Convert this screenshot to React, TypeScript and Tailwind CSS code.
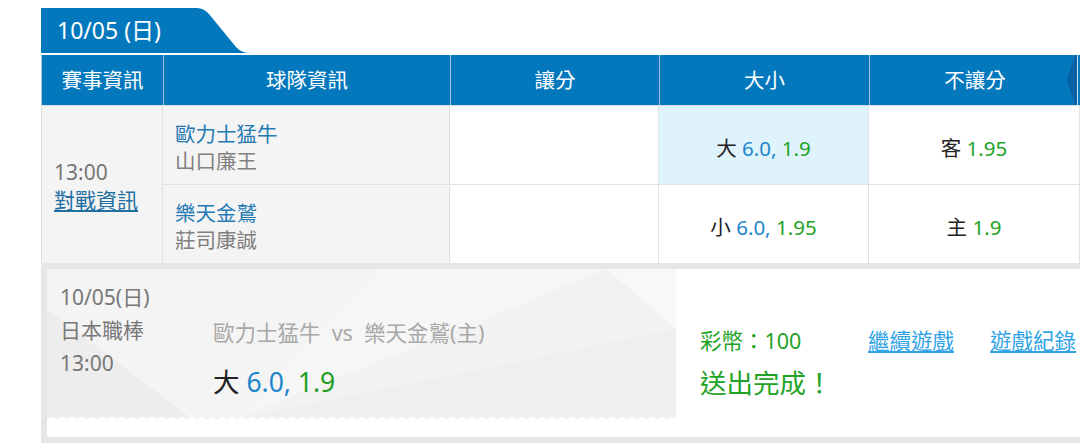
import React from "react";

const font = "font-['Noto_Sans','Noto_Sans_CJK_TC',sans-serif]";

function Zigzag() {
  // scalloped tear-off edge at the bottom of the ticket
  let d = "M0 6 L0 3";
  for (let x = 0; x < 640; x += 10) {
    d += ` Q${x + 2.5} 0 ${x + 5} 0 Q${x + 7.5} 0 ${x + 10} 3`;
  }
  d += " L640 6 Z";
  return (
    <svg width="629" height="6" viewBox="0 0 629 6" className="block">
      <path d={d} fill="#ffffff" />
    </svg>
  );
}

function TicketBg() {
  return (
    <svg className="absolute inset-0" width="629" height="154" viewBox="0 0 629 154">
      <rect width="629" height="154" fill="#f2f2f2" />
      <polygon points="0,0 330,0 190,150 0,154" fill="#f4f4f4" />
      <polygon points="0,40 150,154 0,154" fill="#ededed" />
      <polygon points="330,0 560,0 190,150" fill="#f6f6f6" />
      <polygon points="190,150 629,60 629,154 160,154" fill="#efefef" />
      <polygon points="560,0 629,0 629,60" fill="#f8f8f8" />
    </svg>
  );
}

export default function App() {
  const headCell = "flex items-center justify-center border-r border-[#9fc3dd] text-white text-[20.5px]";
  return (
    <div className={`w-[1080px] h-[444px] bg-white overflow-hidden relative ${font}`}>
      {/* date tab */}
      <div className="flex h-[45px] mt-2 ml-[41px]">
        <div className="w-[152px] bg-[#0478bd] flex items-center pl-4 text-white text-[23px]">10/05 (日)</div>
        <svg width="58" height="45" viewBox="0 0 58 45" className="block">
          <path d="M0 0 H4 Q11 0 16 6 L43 39 Q48 45 58 45 H0 Z" fill="#0478bd" />
        </svg>
      </div>

      {/* table */}
      <div className="ml-[41px] mt-[2px] w-[1039px] relative">
        <div className="grid grid-cols-[122px_287px_209px_210px_211px] h-[50px] bg-[#0478bd] border-l border-[#9fc3dd]">
          <div className={headCell}>賽事資訊</div>
          <div className={headCell}>球隊資訊</div>
          <div className={headCell}>讓分</div>
          <div className={headCell}>大小</div>
          <div className={headCell}>不讓分</div>
        </div>
        <div className="absolute right-[3px] top-0 h-[50px] w-[10px]">
          <svg width="10" height="50" viewBox="0 0 10 50" className="block">
            <polygon points="10,0 10,50 8,50 0,25 8,0" fill="#0560a6" />
          </svg>
        </div>
        <div className="absolute right-[2px] top-0 h-[50px] w-px bg-[#cfe0ec]" />

        <div className="grid grid-cols-[122px_287px_209px_210px_211px] grid-rows-[79px_78px] border-t border-[#dcdcdc] text-[20.5px]">
          <div className="row-span-2 bg-[#f4f4f4] border-r border-l border-[#e0e0e0] flex flex-col justify-center pl-3 pt-[3px] leading-[28px] text-[21px]">
            <span className="text-[#777]">13:00</span>
            <span className="text-[#1f6fa3] underline underline-offset-2">對戰資訊</span>
          </div>
          <div className="bg-[#f4f4f4] border-r border-b border-[#e2e2e2] flex flex-col justify-center pl-3 pt-[6px] leading-[27px]">
            <span className="text-[#2479b3]">歐力士猛牛</span>
            <span className="text-[#808080]">山口廉王</span>
          </div>
          <div className="border-r border-b border-[#e2e2e2]" />
          <div className="bg-[#dff3fc] border-r border-b border-[#e2e2e2] flex items-center justify-center pt-[6px]">
            <span className="text-[#222]">大</span>&nbsp;<span className="text-[#1e86cc]">6.0,</span>&nbsp;<span className="text-[#22a326]">1.9</span>
          </div>
          <div className="border-r border-b border-[#e2e2e2] flex items-center justify-center pt-[6px]">
            <span className="text-[#222]">客</span>&nbsp;<span className="text-[#22a326]">1.95</span>
          </div>

          <div className="bg-[#f4f4f4] border-r border-[#e2e2e2] flex flex-col justify-center pl-3 pt-[6px] leading-[27px]">
            <span className="text-[#2479b3]">樂天金鷲</span>
            <span className="text-[#808080]">莊司康誠</span>
          </div>
          <div className="border-r border-[#e2e2e2]" />
          <div className="border-r border-[#e2e2e2] flex items-center justify-center pt-[6px]">
            <span className="text-[#222]">小</span>&nbsp;<span className="text-[#1e86cc]">6.0,</span>&nbsp;<span className="text-[#22a326]">1.95</span>
          </div>
          <div className="border-r border-[#e2e2e2] flex items-center justify-center pt-[6px]">
            <span className="text-[#222]">主</span>&nbsp;<span className="text-[#22a326]">1.9</span>
          </div>
        </div>
      </div>

      {/* confirmation panel */}
      <div className="ml-[41px] w-[1060px] h-[180px] border-[6px] border-[#e6e6e6] bg-white flex">
        <div className="w-[629px] flex flex-col">
          <div className="relative h-[148px] overflow-hidden">
            <TicketBg />
            <div className="relative flex pt-[12px]">
              <div className="w-[166px] pl-[13px] text-[21px] text-[#777] leading-[33px]">
                <div>10/05(日)</div>
                <div>日本職棒</div>
                <div>13:00</div>
              </div>
              <div className="pt-[37px]">
                <div className="text-[21.5px] text-[#a8a8a8] leading-[30px]">歐力士猛牛&nbsp;&nbsp;vs&nbsp;&nbsp;樂天金鷲(主)</div>
                <div className="text-[26.5px] leading-[40px] mt-[14px]">
                  <span className="text-[#222]">大</span> <span className="text-[#1e86cc]">6.0,</span> <span className="text-[#1e9e1e]">1.9</span>
                </div>
              </div>
            </div>
          </div>
          <div className="bg-[#f2f2f2]">
            <Zigzag />
          </div>
        </div>
        <div className="flex-1 pl-[24px] pt-[56px]">
          <div className="flex items-center">
            <div className="w-[168px] text-[21.5px] text-[#22a326] leading-[30px]">彩幣：100</div>
            <span className="text-[21.5px] text-[#2fa3e6] underline underline-offset-2 w-[122px]">繼續遊戲</span>
            <span className="text-[21.5px] text-[#2fa3e6] underline underline-offset-2">遊戲紀錄</span>
          </div>
          <div className="text-[26.5px] text-[#22a326] leading-[40px] mt-[6px]">送出完成！</div>
        </div>
      </div>
    </div>
  );
}
